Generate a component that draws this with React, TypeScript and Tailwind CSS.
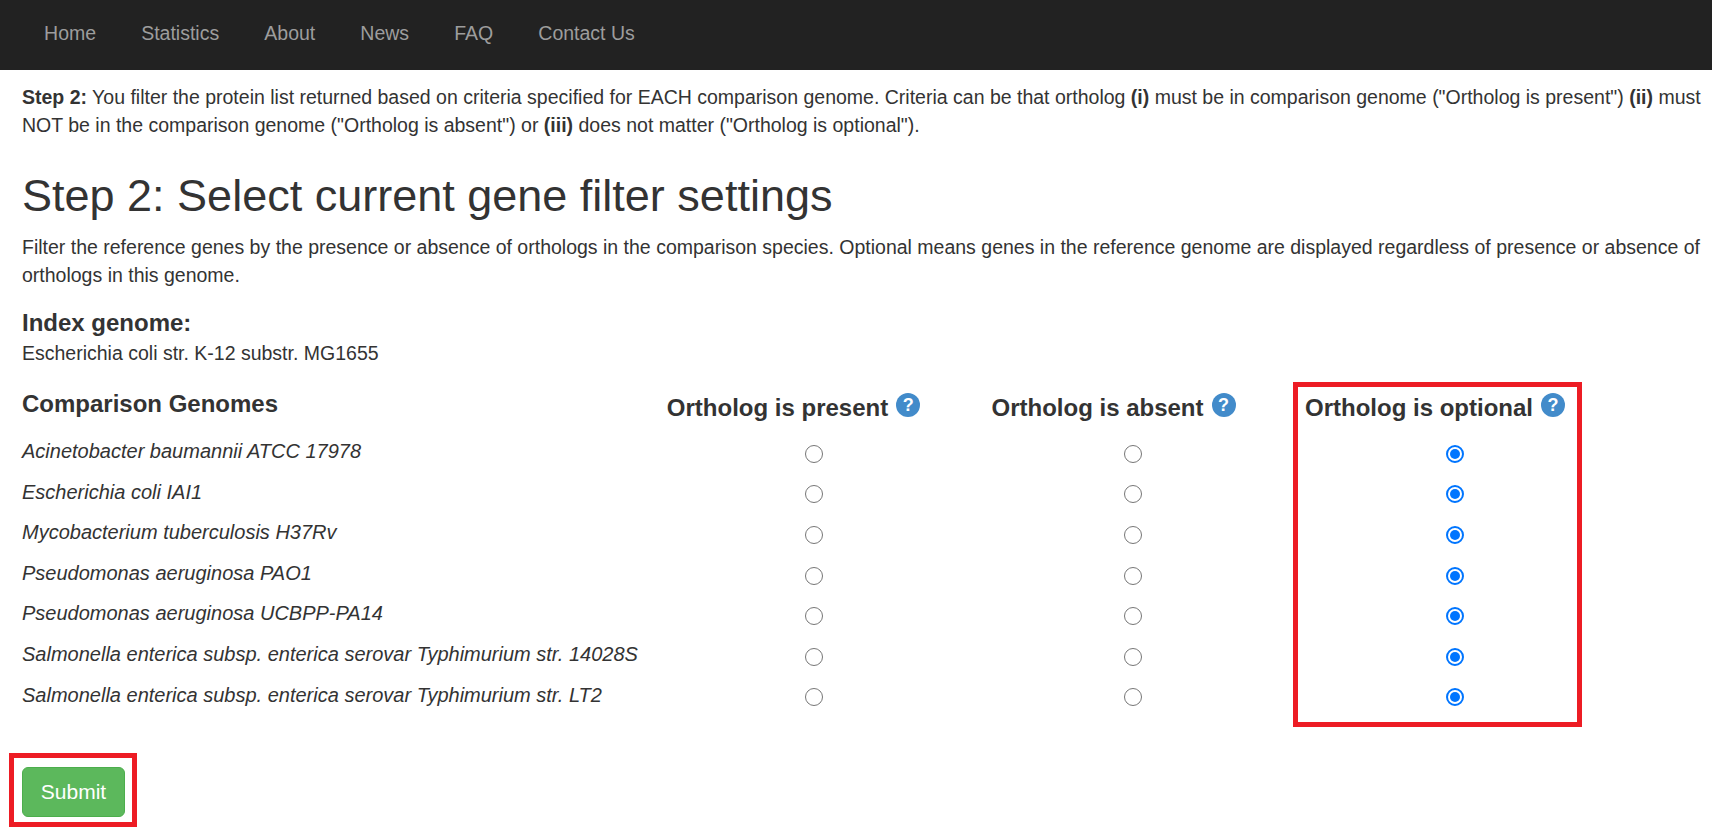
const genomes = [
  "Acinetobacter baumannii ATCC 17978",
  "Escherichia coli IAI1",
  "Mycobacterium tuberculosis H37Rv",
  "Pseudomonas aeruginosa PAO1",
  "Pseudomonas aeruginosa UCBPP-PA14",
  "Salmonella enterica subsp. enterica serovar Typhimurium str. 14028S",
  "Salmonella enterica subsp. enterica serovar Typhimurium str. LT2",
];

function Help() {
  return (
    <span className="mt-[2px] inline-flex h-6 w-6 items-center justify-center rounded-full bg-[#428bca] text-[18px] font-black leading-none text-white">?</span>
  );
}

function Radio({ on }: { on?: boolean }) {
  return on ? (
    <span className="flex h-[18px] w-[18px] items-center justify-center rounded-full border-2 border-[#0075ff] bg-white">
      <span className="h-[10px] w-[10px] rounded-full bg-[#0075ff]" />
    </span>
  ) : (
    <span className="block h-[18px] w-[18px] rounded-full border border-[#767676] bg-white" />
  );
}

export default function App() {
  return (
    <div className="relative min-h-[833px] overflow-hidden bg-white font-['Liberation_Sans',Arial,sans-serif] text-[19.5px] leading-[28px] text-[#333]">
      <nav className="flex h-[70px] items-center bg-[#222] pb-[5px] pl-[21.5px] text-[19.5px] text-[#9d9d9d]">
        {["Home", "Statistics", "About", "News", "FAQ", "Contact Us"].map((n) => (
          <a key={n} className="px-[22.55px]">{n}</a>
        ))}
      </nav>
      <main className="pl-[22px] pr-[8px]">
        <p className="pt-[13px]">
          <b>Step 2:</b> You filter the protein list returned based on criteria specified for EACH comparison genome. Criteria can be that ortholog <b>(i)</b> must be in comparison genome ("Ortholog is present") <b>(ii)</b> must NOT be in the comparison genome ("Ortholog is absent") or <b>(iii)</b> does not matter ("Ortholog is optional").
        </p>
        <h1 className="mt-[33px] text-[45px] font-normal leading-[48px]">Step 2: Select current gene filter settings</h1>
        <p className="mt-[13px]">
          Filter the reference genes by the presence or absence of orthologs in the comparison species. Optional means genes in the reference genome are displayed regardless of presence or absence of orthologs in this genome.
        </p>
        <h3 className="mt-[19px] text-[24px] font-bold leading-[30px]">Index genome:</h3>
        <p className="leading-[30px]">Escherichia coli str. K-12 substr. MG1655</p>
        <div className="mt-[19px] grid grid-cols-[632px_319px_319px_319px]">
          <div className="text-[24px] font-bold leading-[34px]">Comparison Genomes</div>
          <div className="flex h-[46px] items-start justify-center gap-[8px] pt-[4px] text-[24px] font-bold leading-[34px] whitespace-nowrap -ml-[40px]">Ortholog is present <Help /></div>
          <div className="flex h-[46px] items-start justify-center gap-[8px] pt-[4px] text-[24px] font-bold leading-[34px] whitespace-nowrap -ml-[38px]">Ortholog is absent <Help /></div>
          <div className="flex h-[46px] items-start justify-center gap-[8px] pt-[4px] text-[24px] font-bold leading-[34px] whitespace-nowrap -ml-[33px]">Ortholog is optional <Help /></div>
          {genomes.map((g) => (
            <div key={g} className="col-span-4 grid h-[40.6px] grid-cols-subgrid">
              <div className="whitespace-nowrap text-[20px] italic leading-[36px]">{g}</div>
              <div className="flex items-center justify-center pt-[1px]"><Radio /></div>
              <div className="flex items-center justify-center pt-[1px]"><Radio /></div>
              <div className="flex items-center justify-center pt-[1px] pl-[6px]"><Radio on /></div>
            </div>
          ))}
        </div>
        <button className="mt-[50px] flex h-[50px] w-[103px] items-center justify-center rounded-[6px] border border-[#4cae4c] bg-[#5cb85c] text-[21px] text-white">Submit</button>
      </main>
      <div className="absolute left-[1293px] top-[382px] h-[345px] w-[289px] border-[5px] border-[#ed1c24]" />
      <div className="absolute left-[9px] top-[753px] h-[74px] w-[128px] border-[5px] border-[#ed1c24]" />
    </div>
  );
}
